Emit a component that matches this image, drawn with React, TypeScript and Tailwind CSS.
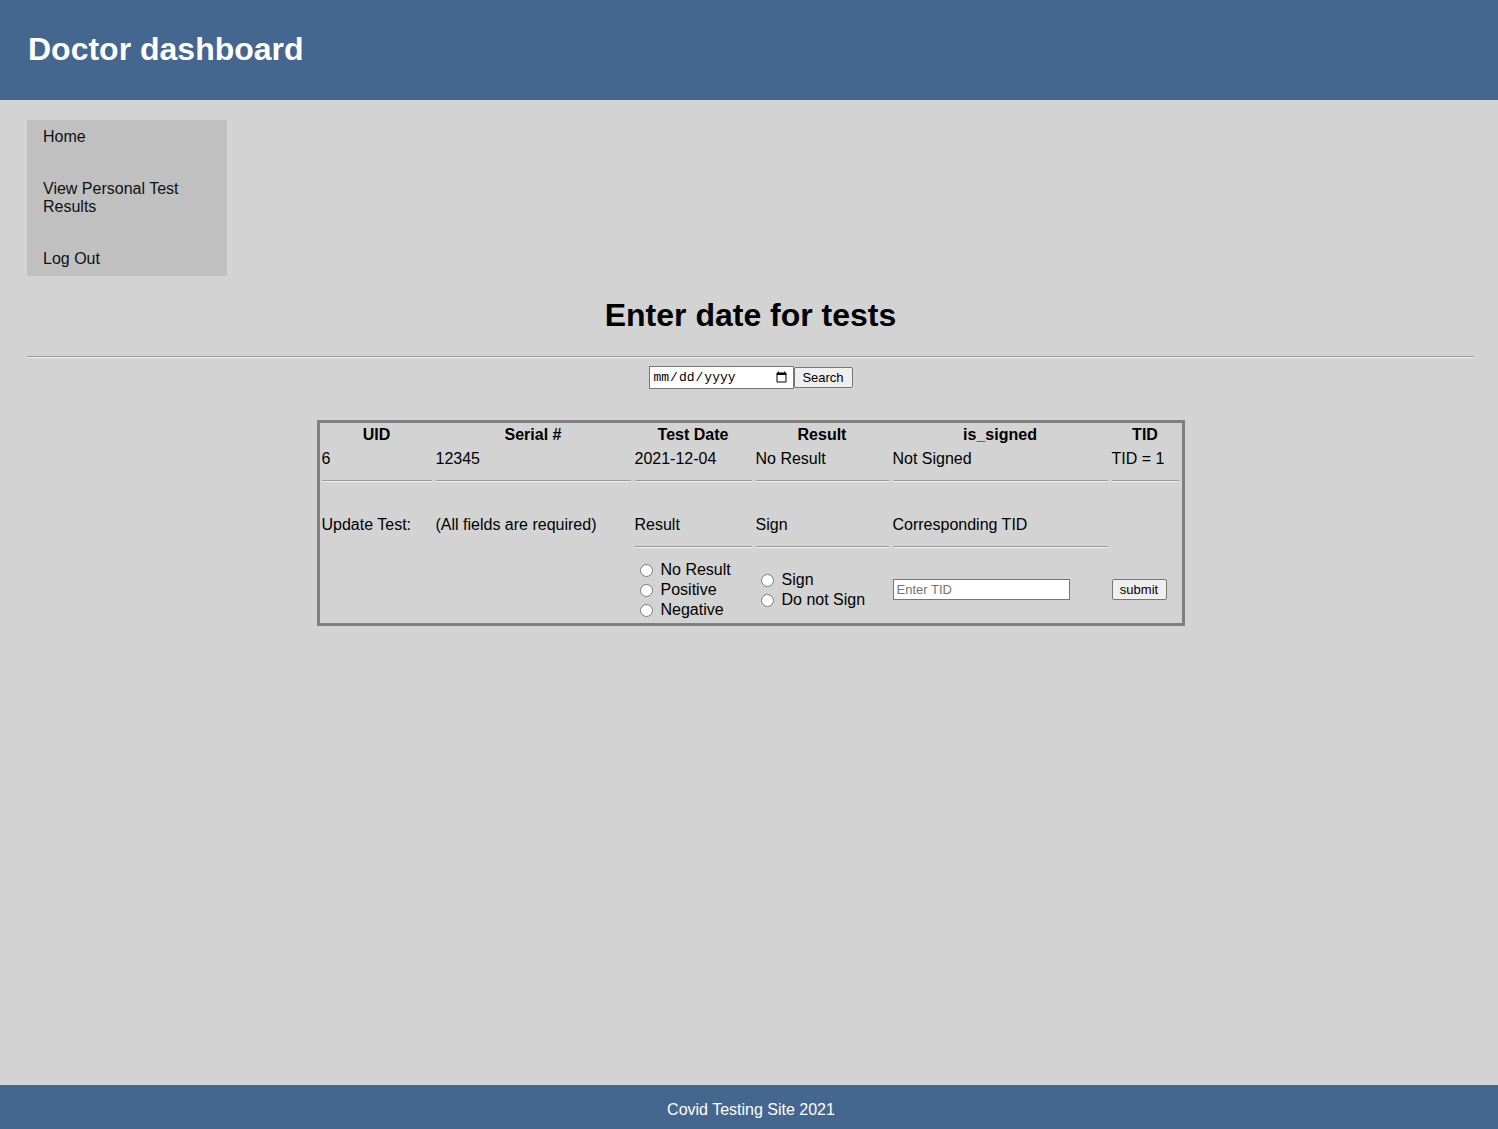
import React from "react";

const font = { fontFamily: '"Liberation Sans", Arial, sans-serif' };

function Hr() {
  return <div className="h-[2px] border-t border-t-[#9a9a9a] border-b border-b-[#eeeeee]" />;
}

function Radio({ label, name }: { label: string; name: string }) {
  return (
    <label className="flex items-center h-[20px] leading-[20px]">
      <input type="radio" name={name} className="ml-[5px] mr-[8px] w-[13px] h-[13px] m-0" />
      <span>{label}</span>
    </label>
  );
}

export default function App() {
  return (
    <div className="min-h-screen flex flex-col bg-[#d3d3d3] text-black text-[16px]" style={font}>
      <header className="h-[100px] bg-[#44668f] flex items-center px-[28px] pb-[2px] shrink-0">
        <h1 className="text-white font-bold text-[32px] leading-[37px]">Doctor dashboard</h1>
      </header>

      <main className="flex-1 pl-[27px] pr-[24px] pt-[20px]">
        <nav className="w-[200px] bg-[#c0c0c0] pt-[8px] pb-[8px] px-[16px] flex flex-col gap-[34px] leading-[18px] text-[#111]">
          <a>Home</a>
          <a>View Personal Test Results</a>
          <a>Log Out</a>
        </nav>

        <h2 className="mt-[21px] text-center font-bold text-[32px] leading-[37px]">Enter date for tests</h2>
        <div className="mt-[22px] h-[2px] border-t border-t-[#9a9a9a] border-b border-b-[#eeeeee]" />

        <div className="mt-[8px] flex justify-center items-center">
          <input
            type="date"
            className="w-[145px] h-[23px] bg-white border border-[#767676] px-[3px] text-[13px] font-mono"
          />
          <button className="h-[21px] w-[59px] bg-[#efefef] border border-[#767676] rounded-[2px] text-[13px] leading-[19px]">
            Search
          </button>
        </div>

        <div className="mt-[31px] mx-auto w-[868px] border-[3px] border-[#808080] pt-[3px] pb-[3px] pl-[2px] pr-[3px]">
          <div className="grid grid-cols-[110px_195px_117px_133px_215px_67px] gap-x-[4px] leading-[18px]">
            {["UID", "Serial #", "Test Date", "Result", "is_signed", "TID"].map((h) => (
              <div key={h} className="font-bold text-center h-[18px]">{h}</div>
            ))}
            {["6", "12345", "2021-12-04", "No Result", "Not Signed", "TID = 1"].map((d, i) => (
              <div key={i} className="pt-[6px]">
                <div className="h-[18px]">{d}</div>
                <div className="mt-[12px]"><Hr /></div>
              </div>
            ))}
            <div className="pt-[34px] h-[51px]">Update Test:</div>
            <div className="pt-[34px]">(All fields are required)</div>
            <div className="pt-[34px]">
              <div className="h-[18px]">Result</div>
              <div className="mt-[12px]"><Hr /></div>
            </div>
            <div className="pt-[34px]">
              <div className="h-[18px]">Sign</div>
              <div className="mt-[12px]"><Hr /></div>
            </div>
            <div className="pt-[34px]">
              <div className="h-[18px]">Corresponding TID</div>
              <div className="mt-[12px]"><Hr /></div>
            </div>
            <div />
            <div />
            <div />
            <div className="pt-[12px] flex flex-col">
              <Radio name="result" label="No Result" />
              <Radio name="result" label="Positive" />
              <Radio name="result" label="Negative" />
            </div>
            <div className="pt-[12px] flex flex-col justify-center">
              <Radio name="sign" label="Sign" />
              <Radio name="sign" label="Do not Sign" />
            </div>
            <div className="pt-[10px] flex items-center">
              <input
                type="text"
                placeholder="Enter TID"
                className="w-[177px] h-[21px] bg-white border border-[#767676] px-[3px] text-[13px] placeholder:text-[#757575]"
              />
            </div>
            <div className="pt-[10px] flex items-center">
              <button className="h-[21px] w-[55px] bg-[#efefef] border border-[#767676] rounded-[2px] text-[13px] leading-[19px]">
                submit
              </button>
            </div>
          </div>
        </div>
      </main>

      <footer className="h-[44px] bg-[#44668f] flex items-center justify-center text-white shrink-0 pt-[6px] pl-[4px]">
        Covid Testing Site 2021
      </footer>
    </div>
  );
}
